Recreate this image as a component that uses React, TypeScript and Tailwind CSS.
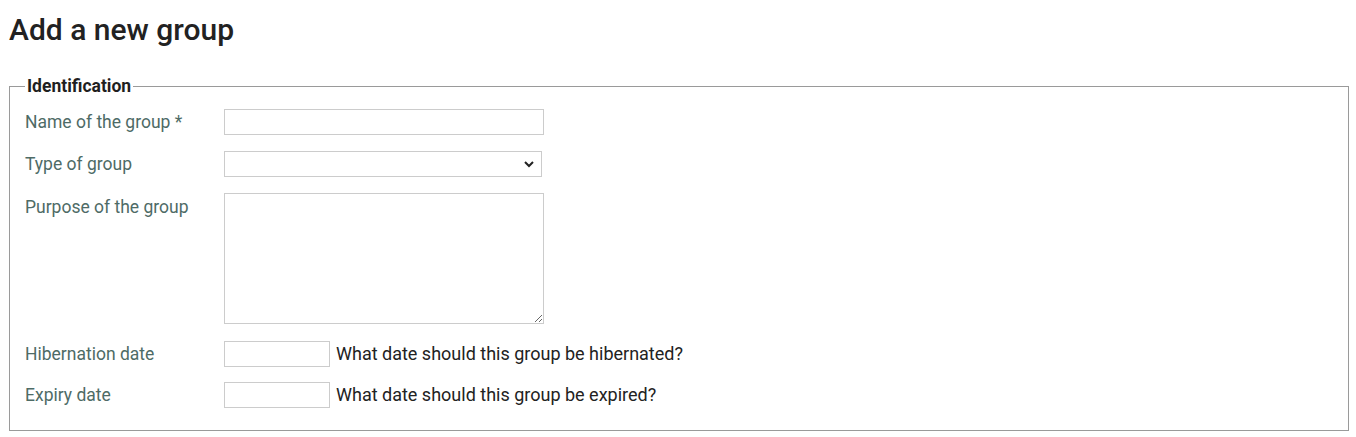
import React from 'react';

const labelCls = 'w-[199px] shrink-0 text-[17.5px] leading-[22px] text-[#4e6b66]';
const boxCls = 'h-[26px] border border-[#cccccc] bg-white outline-none';
const helpCls = 'ml-[6px] text-[18px] leading-[22px] text-[#222222]';

export default function App() {
  return (
    <div className="min-h-screen bg-white pl-[9px] pr-[7px] pt-[12px] text-[#222222] font-['Roboto',sans-serif]">
      <h1 className="text-[30px] font-medium leading-[36px]">Add a new group</h1>

      <fieldset className="mt-[30px] h-[353px] border border-[#9a9a9a] pl-[15px] pr-[10px]">
        <legend className="px-[2px] text-[17.5px] font-bold leading-[16px] text-[#1f1f1f]">
          Identification
        </legend>

        <div className="flex flex-col pt-[15px]">
          <div className="flex items-center">
            <label className={labelCls}>Name of the group *</label>
            <input type="text" className={`${boxCls} w-[320px]`} />
          </div>

          <div className="mt-[16px] flex items-center">
            <label className={labelCls}>Type of group</label>
            <div className={`${boxCls} relative w-[318px]`}>
              <svg
                className="absolute right-[6px] top-[7px]"
                width="12"
                height="10"
                viewBox="0 0 12 10"
                fill="none"
                stroke="#222"
                strokeWidth="2"
              >
                <path d="M2 3l4 4 4-4" />
              </svg>
            </div>
          </div>

          <div className="mt-[16px] flex items-start">
            <label className={`${labelCls} pt-[3px]`}>Purpose of the group</label>
            <textarea className="h-[131px] w-[320px] border border-[#cccccc] bg-white outline-none" />
          </div>

          <div className="mt-[17px] flex items-center">
            <label className={labelCls}>Hibernation date</label>
            <input type="text" className={`${boxCls} w-[106px]`} />
            <span className={helpCls}>What date should this group be hibernated?</span>
          </div>

          <div className="mt-[15px] flex items-center">
            <label className={labelCls}>Expiry date</label>
            <input type="text" className={`${boxCls} w-[106px]`} />
            <span className={helpCls}>What date should this group be expired?</span>
          </div>
        </div>
      </fieldset>
    </div>
  );
}
